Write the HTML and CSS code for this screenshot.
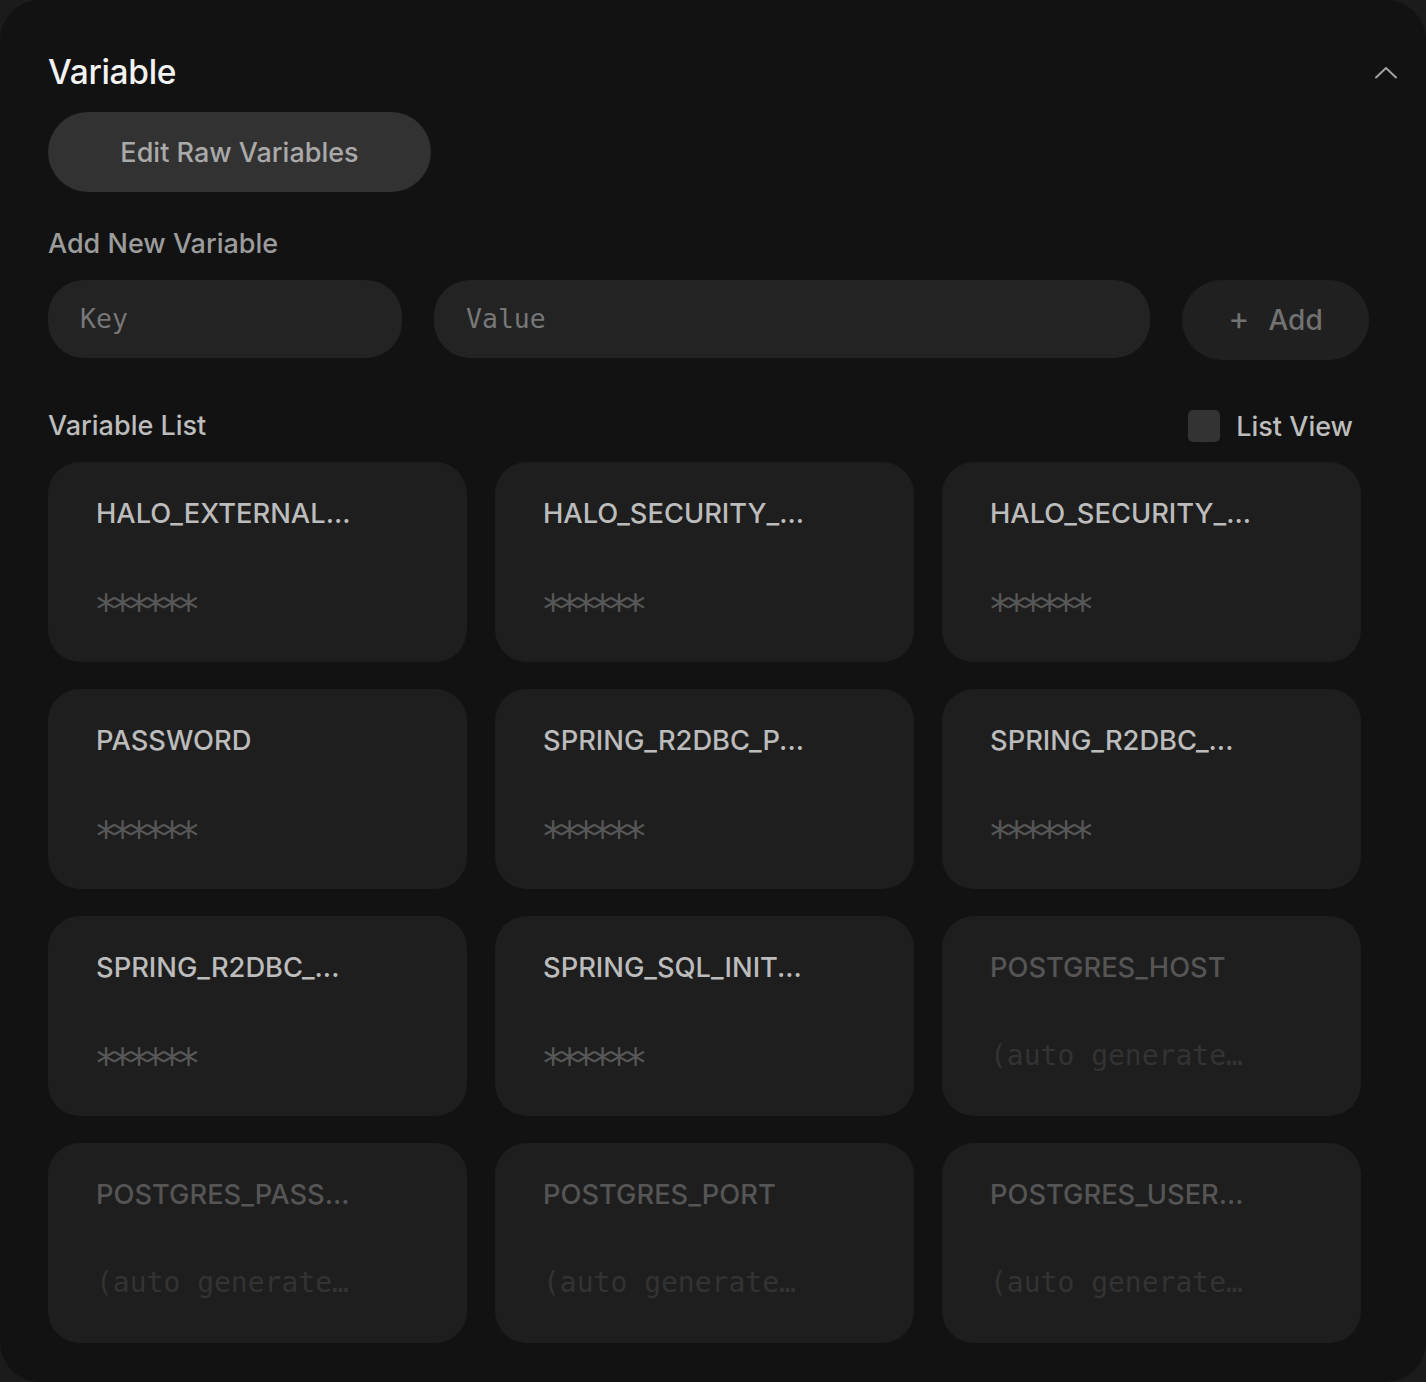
FILE: index.html
```html
<!DOCTYPE html>
<html lang="en">
<head>
<meta charset="utf-8">
<title>Variable</title>
<link rel="stylesheet" href="styles.css">
</head>
<body>
<section class="panel">
  <header class="panel-header">
    <h2 class="title">Variable</h2>
    <svg class="chevron" width="24" height="14" viewBox="0 0 24 14" fill="none">
      <path d="M2 12.5 L12 3 L22 12.5" stroke="#a0a0a0" stroke-width="2" stroke-linecap="round" stroke-linejoin="round"/>
    </svg>
  </header>

  <button class="btn-raw">Edit Raw Variables</button>

  <div class="section-label">Add New Variable</div>
  <div class="add-row">
    <input class="field" placeholder="Key">
    <input class="field" placeholder="Value">
    <button class="btn-add"><span class="plus">+</span>Add</button>
  </div>

  <div class="list-header">
    <div class="section-label light">Variable List</div>
    <label class="toggle"><span class="box"></span>List View</label>
  </div>

  <div class="grid">
    <div class="card"><div class="key" title="HALO_EXTERNAL_URL">HALO_EXTERNAL...</div><div class="val mask">******</div></div>
    <div class="card"><div class="key" title="HALO_SECURITY_INITIALIZER_SUPERADMINUSERNAME">HALO_SECURITY_...</div><div class="val mask">******</div></div>
    <div class="card"><div class="key" title="HALO_SECURITY_INITIALIZER_SUPERADMINPASSWORD">HALO_SECURITY_...</div><div class="val mask">******</div></div>

    <div class="card"><div class="key">PASSWORD</div><div class="val mask">******</div></div>
    <div class="card"><div class="key" title="SPRING_R2DBC_PASSWORD">SPRING_R2DBC_P...</div><div class="val mask">******</div></div>
    <div class="card"><div class="key" title="SPRING_R2DBC_URL">SPRING_R2DBC_...</div><div class="val mask">******</div></div>

    <div class="card"><div class="key" title="SPRING_R2DBC_USERNAME">SPRING_R2DBC_...</div><div class="val mask">******</div></div>
    <div class="card"><div class="key" title="SPRING_SQL_INIT_PLATFORM">SPRING_SQL_INIT...</div><div class="val mask">******</div></div>
    <div class="card dim"><div class="key">POSTGRES_HOST</div><div class="val">(auto generated)</div></div>

    <div class="card dim"><div class="key" title="POSTGRES_PASSWORD">POSTGRES_PASS...</div><div class="val">(auto generated)</div></div>
    <div class="card dim"><div class="key">POSTGRES_PORT</div><div class="val">(auto generated)</div></div>
    <div class="card dim"><div class="key" title="POSTGRES_USERNAME">POSTGRES_USER...</div><div class="val">(auto generated)</div></div>
  </div>
</section>
</body>
</html>
```

FILE: styles.css
```css
* { box-sizing: border-box; }

html, body {
  margin: 0;
  background: #1b1b1b;
}

body {
  font-family: Inter, "Noto Sans", "Liberation Sans", sans-serif;
  color: #bdbdbd;
}

.panel {
  background: #121212;
  border-radius: 40px;
  height: 1382px;
  padding: 52px 28px 0 48px;
  overflow: hidden;
}

.panel-header {
  display: flex;
  align-items: center;
  justify-content: space-between;
  height: 40px;
}

.title {
  margin: 0;
  font-size: 33.5px;
  line-height: 40px;
  font-weight: 500;
  color: #f2f2f2;
  letter-spacing: -0.3px;
}

.chevron { display: block; }

.btn-raw {
  display: block;
  margin-top: 20px;
  width: 383px;
  height: 80px;
  border: 0;
  border-radius: 40px;
  background: #323232;
  color: #a9a9a9;
  font-family: inherit;
  font-size: 27px;
  font-weight: 500;
}

.section-label {
  margin-top: 32px;
  font-size: 27px;
  line-height: 40px;
  font-weight: 500;
  color: #9c9c9c;
}

.section-label.light { margin-top: 0; color: #bcbcbc; }

.add-row {
  display: grid;
  grid-template-columns: 354px 1fr 187px;
  gap: 32px;
  margin-top: 16px;
  margin-right: 29px;
  align-items: start;
}

.field {
  height: 78px;
  border: 0;
  border-radius: 36px;
  background: #232323;
  padding: 0 32px 2px;
  font-family: "DejaVu Sans Mono", "Liberation Mono", monospace;
  font-size: 26.5px;
  color: #ddd;
  outline: none;
}

.field::placeholder { color: #777; }

.btn-add {
  height: 80px;
  border: 0;
  border-radius: 40px;
  background: #202020;
  color: #727272;
  font-family: inherit;
  font-size: 28px;
  font-weight: 500;
  display: flex;
  align-items: center;
  justify-content: center;
}

.btn-add .plus {
  font-weight: 400;
  font-size: 32px;
  margin-right: 19px;
  margin-top: -3px;
}

.list-header {
  display: flex;
  align-items: center;
  justify-content: space-between;
  margin-top: 46px;
  margin-right: 45px;
  height: 40px;
}

.toggle {
  display: flex;
  align-items: center;
  font-size: 27px;
  font-weight: 500;
  color: #bdbdbd;
}

.toggle .box {
  width: 32px;
  height: 32px;
  border-radius: 5px;
  background: #333;
  margin-right: 16px;
}

.grid {
  display: grid;
  grid-template-columns: repeat(3, 1fr);
  column-gap: 28px;
  row-gap: 27px;
  margin-top: 16px;
  margin-right: 37px;
}

.card {
  height: 200px;
  background: #1e1e1e;
  border-radius: 32px;
  padding: 32px 48px 0;
  overflow: hidden;
}

.key {
  max-width: 280px;
  white-space: nowrap;
  overflow: hidden;
  text-overflow: ellipsis;
  font-size: 27.3px;
  line-height: 40px;
  font-weight: 500;
  color: #bcbcbc;
}

.val {
  margin-top: 48px;
  max-width: 262px;
  white-space: nowrap;
  overflow: hidden;
  text-overflow: ellipsis;
  font-family: "DejaVu Sans Mono", "Liberation Mono", monospace;
  font-size: 28px;
  line-height: 40px;
  color: #555;
}

.val.mask {
  margin-top: 56px;
  margin-left: -2px;
  max-width: none;
  overflow: visible;
  font-size: 40px;
  letter-spacing: -7.6px;
  color: #575757;
}

.card.dim .key { color: #555; }
.card.dim .val { color: #333; }
```
